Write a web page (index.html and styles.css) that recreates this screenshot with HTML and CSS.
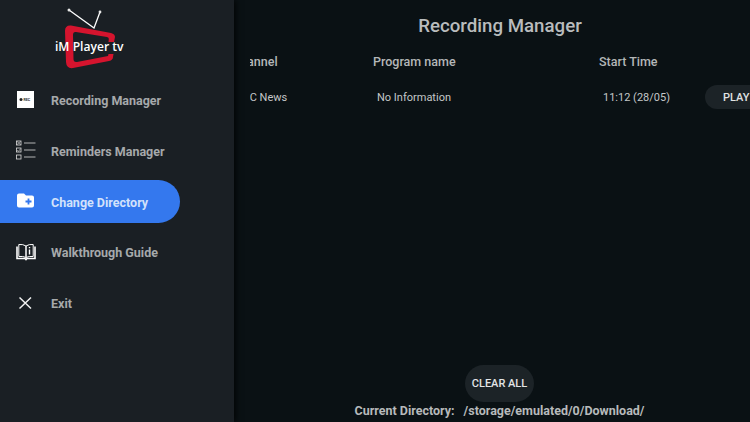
FILE: index.html
```html
<!DOCTYPE html>
<html lang="en">
<head>
<meta charset="utf-8">
<title>Recording Manager</title>
<link rel="stylesheet" href="styles.css">
</head>
<body>
<main class="main">
  <h1 class="title">Recording Manager</h1>
  <div class="table-clip">
    <div class="table">
      <div class="head">Channel</div>
      <div class="head">Program name</div>
      <div class="head">Start Time</div>
      <div></div>
      <div class="cell">BBC News</div>
      <div class="cell">No Information</div>
      <div class="cell">11:12 (28/05)</div>
      <div class="cell"><button class="play">PLAY</button></div>
    </div>
  </div>
  <div class="footer">
    <button class="clear">CLEAR ALL</button>
    <p class="dir"><span class="dir-label">Current Directory:</span><span>/storage/emulated/0/Download/</span></p>
  </div>
</main>
<aside class="drawer">
  <div class="logo">
    <svg class="logo-art" width="100" height="80" viewBox="0 0 100 80">
      <path d="M29 10 L54 28 L60 12" fill="none" stroke="#fff" stroke-width="1.3"/>
      <circle cx="29" cy="10" r="1.5" fill="#e8e8e8"/>
      <circle cx="60" cy="12" r="1.4" fill="#e8e8e8"/>
      <path d="M74 42 L75 37 Q75 34 71 33 L31 25.5 Q25 25 25 31 L26 62 Q26.5 69 33 68 L69 61 Q73 60 73 57 L73.5 54 L68.5 54 L68 56 L37 62 Q33.5 62.5 33.5 59 L33 35 Q33 31.5 36 32 L67 37 Q69 37.5 68.8 39 L68.5 42 Z" fill="#d5142e"/>
    </svg>
    <span class="logo-text">iM Player tv</span>
  </div>
  <nav class="nav">
    <a class="item">
      <svg class="icon" width="20" height="20" viewBox="0 0 20 20">
        <rect x="1" y="1" width="17" height="17" fill="#fff"/>
        <circle cx="5" cy="9.5" r="1.5" fill="#222"/>
        <text x="7.4" y="11.2" class="rec">REC</text>
      </svg>
      <span>Recording Manager</span>
    </a>
    <a class="item">
      <svg class="icon" width="20" height="20" viewBox="0 0 20 20" fill="none" stroke="#dcdcdc">
        <rect x="0.5" y="1" width="4.5" height="4" stroke-width=".8"/>
        <rect x="0.5" y="8" width="4.5" height="4" stroke-width=".8"/>
        <rect x="0.5" y="15" width="4.5" height="4" stroke-width=".8"/>
        <path d="M1 1.5 L4.5 4.5 M4.5 1.5 L1 4.5 M1.2 10 L2.5 11.4 L4.5 8.7" stroke-width=".6"/>
        <path d="M8 3 H19.5 M8 10 H19.5 M8 17 H19.5" stroke-width=".8"/>
      </svg>
      <span>Reminders Manager</span>
    </a>
    <a class="item active">
      <svg class="icon" width="20" height="20" viewBox="0 0 20 20">
        <path d="M1 4.5 Q1 2.5 3 2.5 H8 L10 4.5 H16 Q18 4.5 18 6.5 V14.5 Q18 16.5 16 16.5 H3 Q1 16.5 1 14.5 Z" fill="#fff"/>
        <path d="M9.5 10.5 H15.5 M12.5 7.5 V13.5" stroke="#3478ee" stroke-width="1.8"/>
      </svg>
      <span>Change Directory</span>
    </a>
    <a class="item">
      <svg class="icon" width="20" height="20" viewBox="0 0 20 20" fill="none" stroke="#fff">
        <path d="M1 4.5 V16.5 H9 L10 17.5 L11 16.5 H19 V4.5" stroke-width="1.6"/>
        <path d="M2.8 2.5 Q7 2 10 4 V15.5 Q7 14 2.8 14.5 Z M17.2 2.5 Q13 2 10 4 V15.5 Q13 14 17.2 14.5 Z" stroke-width="1"/>
        <path d="M13.5 7.5 V12.5 M13.5 5 V6.3" stroke-width="1.4"/>
      </svg>
      <span>Walkthrough Guide</span>
    </a>
    <a class="item">
      <svg class="icon" width="20" height="20" viewBox="0 0 20 20" fill="none" stroke="#f2f2f2" stroke-width="1.5">
        <path d="M3.5 4.5 L15 15.5 M15 4.5 L3.5 15.5"/>
      </svg>
      <span>Exit</span>
    </a>
  </nav>
</aside>
</body>
</html>
```

FILE: styles.css
```css
html, body {
  margin: 0;
  padding: 0;
  width: 750px;
  height: 422px;
  overflow: hidden;
}
body {
  background: #0a1114;
  font-family: Roboto, "Liberation Sans", sans-serif;
  color: #c4c7c8;
  position: relative;
}
.main {
  height: 422px;
  display: flex;
  flex-direction: column;
  box-sizing: border-box;
  padding-left: 250px;
}
.title {
  margin: 15px 0 0;
  font-size: 18.7px;
  line-height: 22px;
  font-weight: 500;
  text-align: center;
  color: #b9bcbd;
}
.table-clip {
  margin-top: 14px;
  overflow: hidden;
}
.table {
  margin-left: -18px;
  display: grid;
  grid-template-columns: 141px 226px 106px 1fr;
  grid-template-rows: 20px 52px;
  align-items: center;
  white-space: nowrap;
}
.head {
  font-size: 12.5px;
  font-weight: 500;
  color: #b4b7b8;
}
.cell {
  font-size: 11px;
  padding-left: 4px;
  color: #c4c7c8;
}
.play {
  margin-left: -4px;
  display: block;
  width: 80px;
  height: 24px;
  padding: 0 0 0 18px;
  border: 0;
  border-radius: 12px;
  background: #1c2327;
  color: #e0e2e3;
  font: 500 11px Roboto, sans-serif;
  text-align: left;
}
.footer {
  margin-top: auto;
  padding: 0 1px 4px 0;
  display: flex;
  flex-direction: column;
  align-items: center;
}
.clear {
  width: 69px;
  height: 37px;
  border: 0;
  border-radius: 19px;
  background: #1c2327;
  color: #e3e5e6;
  font: 500 11px Roboto, sans-serif;
  padding: 0;
}
.dir {
  margin: 2px 0 0;
  font-size: 12.5px;
  line-height: 14px;
  font-weight: 700;
  color: #b7babb;
  white-space: nowrap;
}
.dir-label {
  margin-right: 9px;
}
.drawer {
  position: absolute;
  left: 0;
  top: 0;
  width: 234px;
  height: 422px;
  background: #1a1f24;
  box-shadow: 2px 0 6px rgba(0, 0, 0, .75);
}
.logo {
  position: relative;
  height: 80px;
}
.logo-art {
  position: absolute;
  left: 40px;
  top: 0;
}
.logo-text {
  position: absolute;
  left: 55px;
  top: 39px;
  font-family: "Open Sans", Roboto, sans-serif;
  font-size: 12.1px;
  line-height: 16px;
  font-weight: 600;
  color: #fff;
  white-space: nowrap;
}
.nav {
  display: flex;
  flex-direction: column;
  gap: 7.8px;
  margin-top: -2px;
  padding-right: 54px;
}
.item {
  display: flex;
  align-items: center;
  height: 43px;
  padding-left: 16px;
  gap: 15px;
  font-size: 12.5px;
  font-weight: 700;
  color: #a6a9ab;
  white-space: nowrap;
}
.item span {
  padding-top: 2px;
}
.item.active {
  background: #3478ee;
  color: #d3e2fb;
  border-radius: 0 22px 22px 0;
}
.icon {
  flex: none;
  display: block;
}
.rec {
  font-size: 3.6px;
  font-weight: 700;
  fill: #333;
}
```
